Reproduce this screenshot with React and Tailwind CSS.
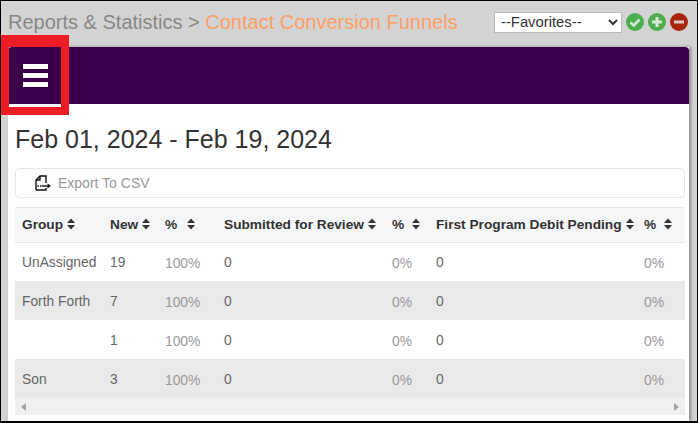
const font = { fontFamily: '"Liberation Sans", Arial, sans-serif' };

function SortIcon({ gap }) {
  return (
    <svg viewBox="0 0 8 12" className={gap + ' inline-block h-[12px] w-[8px] align-[-1px]'} fill="#333">
      <path d="M4 0.5 L8 5 H0 Z" />
      <path d="M4 11.5 L8 7 H0 Z" />
    </svg>
  );
}

function Head({ label, gap = 'ml-[4px]' }) {
  return (
    <th className="px-[7px] pt-[2px] text-left align-middle text-[13.7px] font-bold whitespace-nowrap text-[#333]">
      {label}
      <SortIcon gap={gap} />
    </th>
  );
}

const rows = [
  { group: 'UnAssigned', count: 19, shade: false },
  { group: 'Forth Forth', count: 7, shade: true },
  { group: '', count: 1, shade: false },
  { group: 'Son', count: 3, shade: true },
];

function ExportIcon() {
  return (
    <svg viewBox="0 0 16 16" className="h-[16px] w-[16px]" fill="none" stroke="#111" strokeWidth="1.4">
      <path d="M1 15 V5 L5 1 H11 V8" />
      <path d="M5 1 V5 H1" />
      <path d="M1 15 H11 V13" />
      <path d="M2.5 11 H7" strokeDasharray="1.5 1" />
      <path d="M7 11 H13" />
      <path d="M12.5 8.5 L16 11 L12.5 13.5 Z" fill="#111" stroke="none" />
    </svg>
  );
}

export default function App() {
  return (
    <div style={font} className="relative flex h-[423px] w-[698px] flex-col overflow-hidden border border-b-2 border-black bg-[#d3d3d3] pr-[8px] pl-[7px]">
      {/* title row */}
      <div className="flex h-[46px] shrink-0 items-center justify-between pb-[4px]">
        <div className="text-[20px] whitespace-nowrap text-[#888]">
          Reports &amp; Statistics &gt; <span className="text-[#ff9e66]">Contact Conversion Funnels</span>
        </div>
        <div className="mr-[1px] flex items-center">
          <select style={font} className="h-[21px] w-[128px] border border-[#bbb] bg-white pl-[2px] text-[14.8px] text-[#333]">
            <option>--Favorites--</option>
          </select>
          <svg viewBox="0 0 18 18" className="ml-[4px] h-[18px] w-[18px]">
            <circle cx="9" cy="9" r="9" fill="#4cae4c" />
            <path d="M4.5 9.5 L7.8 12.5 L13.5 6.5" fill="none" stroke="#d8e8d8" strokeWidth="2.6" />
          </svg>
          <svg viewBox="0 0 18 18" className="ml-[4px] h-[18px] w-[18px]">
            <circle cx="9" cy="9" r="9" fill="#4cae4c" />
            <path d="M9 4 V14 M4 9 H14" stroke="#d8e8d8" strokeWidth="3" />
          </svg>
          <svg viewBox="0 0 18 18" className="ml-[4px] h-[18px] w-[18px]">
            <circle cx="9" cy="9" r="9" fill="#a8250c" />
            <path d="M4 9 H14" stroke="#d8c8c8" strokeWidth="3" />
          </svg>
        </div>
      </div>

      {/* panel */}
      <div className="flex min-h-0 flex-1 flex-col bg-white shadow-[2px_0_3px_rgba(0,0,0,0.35)]">
        <div className="flex h-[57px] shrink-0 items-start rounded-t-[4px] bg-[#3c004a] pt-[17px] pl-[15px]">
          <div className="flex h-[23px] w-[25px] flex-col justify-between">
            <div className="h-[5px] bg-white" />
            <div className="h-[5px] bg-white" />
            <div className="h-[5px] bg-white" />
          </div>
        </div>

        <div className="flex min-h-0 flex-1 flex-col pr-[4px] pl-[7px]">
          <h1 className="mt-[20px] h-[30px] text-[25px] leading-[30px] text-[#333]">Feb 01, 2024 - Feb 19, 2024</h1>

          <div className="mt-[14px] flex h-[30px] shrink-0 items-center rounded-[4px] border border-[#e7e7e7] pl-[19px] text-[14px] text-[#999]">
            <ExportIcon />
            <span className="ml-[7px]">Export To CSV</span>
          </div>

          <div className="mt-[9px] border-t border-[#e7e7e7]">
            <table className="w-[670px] table-fixed border-collapse">
              <colgroup>
                <col className="w-[88px]" />
                <col className="w-[55px]" />
                <col className="w-[59px]" />
                <col className="w-[168px]" />
                <col className="w-[44px]" />
                <col className="w-[208px]" />
                <col className="w-[48px]" />
              </colgroup>
              <thead>
                <tr className="h-[34px] border-b border-[#e7e7e7] bg-[#f5f6f8]">
                  <Head label="Group" />
                  <Head label="New" />
                  <Head label="%" gap="ml-[10px]" />
                  <Head label="Submitted for Review" />
                  <Head label="%" gap="ml-[8px]" />
                  <Head label="First Program Debit Pending" />
                  <Head label="%" gap="ml-[8px]" />
                </tr>
              </thead>
              <tbody className="text-[13.8px] text-[#666]">
                {rows.map((r, i) => (
                  <tr key={i} className={r.shade ? 'h-[39px] bg-[#e9e9e9]' : 'h-[39px] bg-white'}>
                    <td className="px-[7px] pt-[3px] whitespace-nowrap">{r.group}</td>
                    <td className="px-[7px] pt-[3px]">{r.count}</td>
                    <td className="px-[7px] pt-[6px] text-[#999]">100%</td>
                    <td className="px-[7px] pt-[3px]">0</td>
                    <td className="px-[7px] pt-[6px] text-[#999]">0%</td>
                    <td className="px-[7px] pt-[3px]">0</td>
                    <td className="px-[7px] pt-[6px] text-[#999]">0%</td>
                  </tr>
                ))}
              </tbody>
            </table>
            {/* horizontal scrollbar */}
            <div className="flex h-[17px] w-[670px] items-center justify-between bg-[#f0f0f0] px-[6px]">
              <svg viewBox="0 0 5 8" className="h-[8px] w-[5px]" fill="#a3a3a3"><path d="M5 0 V8 L0 4 Z" /></svg>
              <svg viewBox="0 0 5 8" className="h-[8px] w-[5px]" fill="#a3a3a3"><path d="M0 0 V8 L5 4 Z" /></svg>
            </div>
          </div>
        </div>
      </div>

      {/* red annotation box */}
      <div className="absolute top-[34px] left-0 h-[80px] w-[68px] border-x-[8px] border-t-[12px] border-b-[8px] border-[#ee1c25]" />
    </div>
  );
}
